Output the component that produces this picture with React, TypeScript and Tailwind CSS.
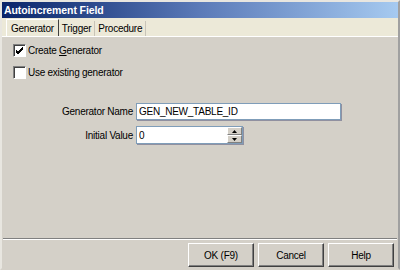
import React from "react";

function Check({ checked }: { checked?: boolean }) {
  return (
    <div className="w-[13px] h-[13px] bg-white border border-t-[#808080] border-l-[#808080] border-b-white border-r-white shadow-[inset_1px_1px_0_#404040] flex items-center justify-center">
      {checked && (
        <svg width="9" height="9" viewBox="0 0 9 9">
          <path d="M1 4 L3 6 L8 1 M1 5 L3 7 L8 2 M1 6 L3 8 L8 3" stroke="#000" strokeWidth="1" fill="none" />
        </svg>
      )}
    </div>
  );
}

function Btn({ label }: { label: string }) {
  return (
    <div className="w-[66px] h-[24px] bg-[#d4d0c8] border border-t-white border-l-white border-b-[#404040] border-r-[#404040] shadow-[inset_-1px_-1px_0_#808080] flex items-center justify-center text-black">
      {label}
    </div>
  );
}

export default function App() {
  return (
    <div
      className="w-[400px] h-[270px] bg-[#d4d0c8] border-2 border-t-[#e8e6e0] border-l-[#e8e6e0] border-r-[#a0a0a0] border-b-[#d4d0c8] flex flex-col overflow-hidden text-[10px] tracking-[-0.25px]"
      style={{ fontFamily: '"Liberation Sans", Arial, sans-serif' }}
    >
      <div className="h-[16px] bg-gradient-to-r from-[#0a246a] via-[#5b7ab8] to-[#a6caf0] flex items-center pl-[2px]">
        <span className="text-white font-bold text-[10.5px] tracking-[-0.1px] leading-none">Autoincrement Field</span>
      </div>
      <div className="h-[19px] bg-[#ece9d8] border-b border-b-white flex items-end pl-[4px] text-black">
        <div className="h-[17px] px-[4px] flex items-center border-l border-l-white border-t border-t-white border-r border-r-[#404040] bg-[#ece9d8]">Generator</div>
        <div className="h-[15px] px-[3px] flex items-center border-r border-r-[#c8c4b8]">Trigger</div>
        <div className="h-[15px] px-[3px] flex items-center border-r border-r-[#c8c4b8]">Procedure</div>
      </div>
      <div className="flex-1 flex flex-col text-black">
        <div className="flex flex-col gap-[9px] pl-[11px] pt-[7px] leading-[13px]">
          <div className="flex items-center gap-[2px]">
            <Check checked />
            <span>
              Create <span className="underline">G</span>enerator
            </span>
          </div>
          <div className="flex items-center gap-[2px]">
            <Check />
            <span>Use existing generator</span>
          </div>
        </div>
        <div className="mt-[24px] grid grid-cols-[134px_auto] gap-y-[6px] items-center">
          <div className="text-right pr-[3px]">Generator Name</div>
          <div className="w-[205px] h-[17px] bg-white border border-[#7f9db9] shadow-[1px_1px_0_#9090a0] flex items-center pl-[2px]">GEN_NEW_TABLE_ID</div>
          <div className="text-right pr-[3px]">Initial Value</div>
          <div className="w-[107px] h-[18px] bg-white border border-[#7f9db9] shadow-[1px_1px_0_#9090a0] flex items-center">
            <span className="flex-1 pl-[2px]">0</span>
            <div className="w-[15px] h-full flex flex-col">
              <div className="flex-1 bg-[#d4d0c8] border border-t-white border-l-white border-b-[#808080] border-r-[#808080] flex items-center justify-center">
                <svg width="5" height="3" viewBox="0 0 5 3"><path d="M0 3 L2.5 0 L5 3 Z" fill="#000" /></svg>
              </div>
              <div className="flex-1 bg-[#d4d0c8] border border-t-white border-l-white border-b-[#808080] border-r-[#808080] flex items-center justify-center">
                <svg width="5" height="3" viewBox="0 0 5 3"><path d="M0 0 L2.5 3 L5 0 Z" fill="#000" /></svg>
              </div>
            </div>
          </div>
        </div>
        <div className="flex-1" />
        <div className="mx-[1px] border-t border-t-[#808080] border-b border-b-white" />
        <div className="flex justify-end gap-[4px] pr-[4px] pt-[3px] pb-[1px]">
          <Btn label="OK (F9)" />
          <Btn label="Cancel" />
          <Btn label="Help" />
        </div>
      </div>
    </div>
  );
}
